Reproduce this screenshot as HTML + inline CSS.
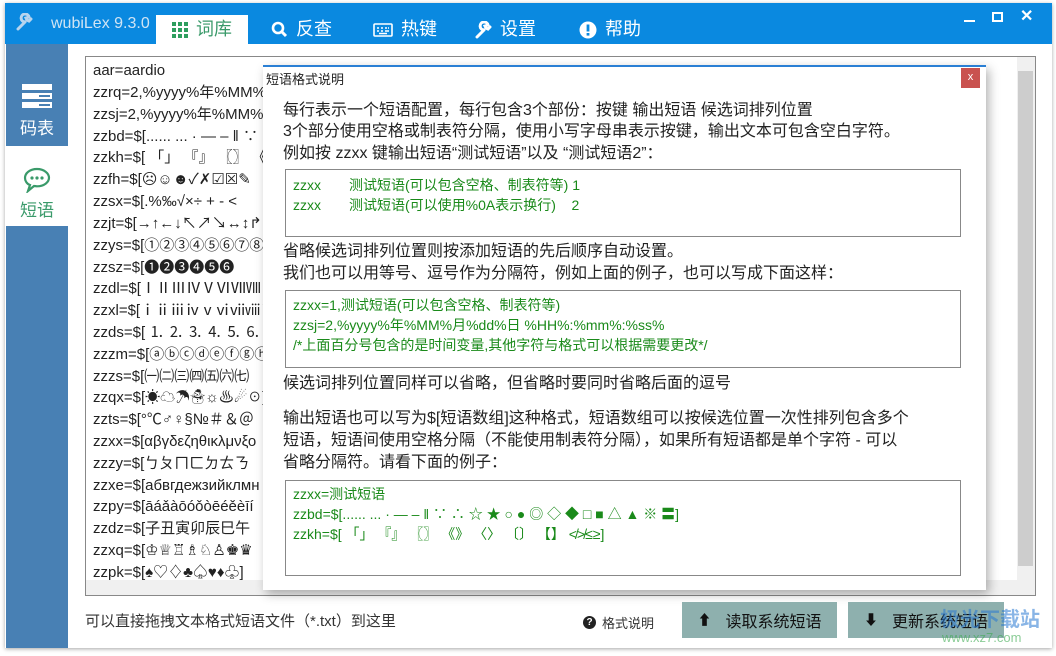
<!DOCTYPE html>
<html><head><meta charset="utf-8"><style>
*{margin:0;padding:0;box-sizing:border-box}
body{width:1056px;height:656px;background:#fff;position:relative;overflow:hidden;font-family:"Liberation Sans","Noto Sans CJK SC",sans-serif;color:#222}
.abs{position:absolute}
#win{left:5px;top:3px;width:1047px;height:645px;background:#fff;box-shadow:0 1px 4px rgba(0,0,0,.35)}
#tb{left:5px;top:3px;width:1047px;height:41px;background:#0a89e0}
.tab{position:absolute;top:12px;height:29px;color:#fff;font-size:18px;line-height:29px;display:flex;align-items:center}
.tab svg{margin-right:8px}
#side{left:6px;top:44px;width:62px;height:604px;background:#4880b4}
#list{left:85px;top:56px;width:951px;height:540px;border:1px solid #888;background:#fff;overflow:hidden}
.ln{position:absolute;left:7px;width:200px;height:21px;line-height:21px;overflow:hidden;font-size:15px;white-space:nowrap;color:#222}
#dlg{left:263px;top:65px;width:723px;height:525px;background:#fff;border-top:2px solid #2a7fd4;box-shadow:3px 4px 10px rgba(0,0,0,.3)}
.dt{position:absolute;left:20px;font-size:16px;white-space:nowrap;color:#222;line-height:21.5px}
.box{position:absolute;left:22px;width:676px;border:1px solid #888}
.g{position:absolute;left:7px;font-size:14px;color:#1a8a1a;white-space:nowrap;line-height:20px}
.btn{position:absolute;top:602px;height:36px;background:#8eb0ae;color:#111;font-size:16px;display:flex;align-items:center;justify-content:center}
</style></head><body>
<div id="win" class="abs"></div>
<div id="tb" class="abs">
 <svg class="abs" style="left:10px;top:10px" width="18" height="18" viewBox="0 0 18 18"><path d="M3 16 L10 9 M10 9 a4 4 0 1 1 4 -5 l-3 1 1 2 2 1 2-2" stroke="#b8d4ee" stroke-width="3" fill="none" stroke-linecap="round"/></svg>
 <div class="abs" style="left:46px;top:12px;color:#d0e4f4;font-size:16px">wubiLex 9.3.0</div>
 <div class="tab" style="left:151px;width:92px;background:#fff;color:#3a9a6a;justify-content:center"><svg width="16" height="16" viewBox="0 0 16 16" fill="#2e9e5e"><rect x="0" y="0" width="4" height="4"/><rect x="6" y="0" width="4" height="4"/><rect x="12" y="0" width="4" height="4"/><rect x="0" y="6" width="4" height="4"/><rect x="6" y="6" width="4" height="4"/><rect x="12" y="6" width="4" height="4"/><rect x="0" y="12" width="4" height="4"/><rect x="6" y="12" width="4" height="4"/><rect x="12" y="12" width="4" height="4"/></svg>词库</div>
 <div class="tab" style="left:266px"><svg width="17" height="17" viewBox="0 0 17 17"><circle cx="7" cy="7" r="5" stroke="#fff" stroke-width="2.6" fill="none"/><path d="M11 11 L15 15" stroke="#fff" stroke-width="3"/></svg>反查</div>
 <div class="tab" style="left:368px"><svg width="20" height="14" viewBox="0 0 20 14"><rect x="1" y="1" width="18" height="12" rx="1" stroke="#fff" stroke-width="1.6" fill="none"/><path d="M4 5h2M8 5h2M12 5h2M15 5h1M4 8h2M8 8h2M12 8h4M6 10.5h8" stroke="#fff" stroke-width="1.4"/></svg>热键</div>
 <div class="tab" style="left:469px"><svg width="18" height="18" viewBox="0 0 18 18"><path d="M3 16 L10 9 M10 9 a4 4 0 1 1 4 -5 l-3 1 1 2 2 1 2-2" stroke="#fff" stroke-width="3" fill="none" stroke-linecap="round"/></svg>设置</div>
 <div class="tab" style="left:574px"><svg width="18" height="18" viewBox="0 0 18 18"><circle cx="9" cy="9" r="8.5" fill="#fff"/><rect x="7.6" y="3.5" width="2.8" height="7" fill="#0a89e0"/><rect x="7.6" y="12" width="2.8" height="2.6" fill="#0a89e0"/></svg>帮助</div>
 <div class="abs" style="left:959px;top:17px;width:11px;height:2px;background:#fff"></div>
 <div class="abs" style="left:987px;top:9px;width:11px;height:10px;border:2px solid #fff"></div>
 <div class="abs" style="left:1015px;top:3px;color:#fff;font-size:16px;font-weight:bold">✕</div>
</div>
<div id="side" class="abs">
 <div class="abs" style="left:0;top:102px;width:62px;height:80px;background:#fff"></div>
 <svg class="abs" style="left:16px;top:40px" width="30" height="24" viewBox="0 0 30 24" fill="#fff"><rect y="0" width="30" height="6"/><rect y="9" width="30" height="6"/><rect y="18" width="30" height="6"/><rect x="17" y="11" width="11" height="2" fill="#4880b4"/><rect x="17" y="20" width="11" height="2" fill="#4880b4"/></svg>
 <div class="abs" style="left:14px;top:70px;color:#fff;font-size:17px">码表</div>
 <svg class="abs" style="left:17px;top:123px" width="28" height="26" viewBox="0 0 28 26"><path d="M14 2C7 2 2 6 2 11c0 3 2 6 5 7l-2 6 6-5c1 0 2 .3 3 .3 7 0 12-4 12-8.5S21 2 14 2z" fill="none" stroke="#3a9a6a" stroke-width="2.2"/><circle cx="9" cy="11" r="1.6" fill="#3a9a6a"/><circle cx="14" cy="11" r="1.6" fill="#3a9a6a"/><circle cx="19" cy="11" r="1.6" fill="#3a9a6a"/></svg>
 <div class="abs" style="left:14px;top:152px;color:#3a9a6a;font-size:17px">短语</div>
</div>
<div id="list" class="abs">
 <div class="ln" style="top:3px">aar=aardio</div>
 <div class="ln" style="top:25px">zzrq=2,%yyyy%年%MM%</div>
 <div class="ln" style="top:47px">zzsj=2,%yyyy%年%MM%</div>
 <div class="ln" style="top:69px">zzbd=$[...... ... · — – ‖ ∵ ∴</div>
 <div class="ln" style="top:90px">zzkh=$[ 「」 『』 〖〗 《</div>
 <div class="ln" style="top:112px">zzfh=$[☹☺☻✓✗☑☒✎</div>
 <div class="ln" style="top:134px">zzsx=$[.%‰√×÷ + - &lt;</div>
 <div class="ln" style="top:156px">zzjt=$[→↑←↓↖↗↘↔↕↱↲</div>
 <div class="ln" style="top:178px">zzys=$[①②③④⑤⑥⑦⑧⑨</div>
 <div class="ln" style="top:200px">zzsz=$[❶❷❸❹❺❻</div>
 <div class="ln" style="top:221px">zzdl=$[ⅠⅡⅢⅣⅤⅥⅦⅧⅨ</div>
 <div class="ln" style="top:243px">zzxl=$[ⅰⅱⅲⅳⅴⅵⅶⅷⅸⅹ]</div>
 <div class="ln" style="top:265px">zzds=$[ ⒈ ⒉ ⒊ ⒋ ⒌ ⒍ ⒎ ⒏</div>
 <div class="ln" style="top:287px">zzzm=$[ⓐⓑⓒⓓⓔⓕⓖⓗ</div>
 <div class="ln" style="top:309px">zzzs=$[㈠㈡㈢㈣㈤㈥㈦</div>
 <div class="ln" style="top:330px">zzqx=$[☀☁☂☃☼♨☄☉]</div>
 <div class="ln" style="top:352px">zzts=$[°℃♂♀§№＃＆＠</div>
 <div class="ln" style="top:374px">zzxx=$[αβγδεζηθικλμνξο</div>
 <div class="ln" style="top:396px">zzzy=$[ㄅㄆㄇㄈㄉㄊㄋ</div>
 <div class="ln" style="top:418px">zzxe=$[абвгдежзийклмн</div>
 <div class="ln" style="top:439px">zzpy=$[āáǎàōóǒòēéěèīí</div>
 <div class="ln" style="top:461px">zzdz=$[子丑寅卯辰巳午</div>
 <div class="ln" style="top:483px">zzxq=$[♔♕♖♗♘♙♚♛</div>
 <div class="ln" style="top:505px">zzpk=$[♠♡♢♣♤♥♦♧]</div>
 <div class="abs" style="left:0;top:523px;width:949px;height:16px;background:#f0f0f0"></div>
 <div class="abs" style="left:931px;top:0;width:18px;height:523px;background:#f0f0f0"></div>
 <div class="abs" style="left:932px;top:14px;width:15px;height:495px;background:#cdcdcd"></div>
</div>
<div id="dlg" class="abs">
 <div class="abs" style="left:3px;top:2px;font-size:13px;color:#222">短语格式说明</div>
 <div class="abs" style="left:698px;top:1px;width:19px;height:20px;background:#c9524f;color:#fff;font-size:11px;text-align:center;line-height:19px">x</div>
 <div class="dt" style="top:33px">每行表示一个短语配置，每行包含3个部份：按键 输出短语 候选词排列位置</div>
 <div class="dt" style="top:54px">3个部分使用空格或制表符分隔，使用小写字母串表示按键，输出文本可包含空白字符。</div>
 <div class="dt" style="top:76px">例如按 zzxx 键输出短语“测试短语”以及 “测试短语2”：</div>
 <div class="box" style="top:102px;height:68px">
  <div class="g" style="top:5px">zzxx</div><div class="g" style="left:63px;top:5px">测试短语(可以包含空格、制表符等) 1</div>
  <div class="g" style="top:25px">zzxx</div><div class="g" style="left:63px;top:25px">测试短语(可以使用%0A表示换行)&nbsp;&nbsp;&nbsp; 2</div>
 </div>
 <div class="dt" style="top:174px">省略候选词排列位置则按添加短语的先后顺序自动设置。</div>
 <div class="dt" style="top:196px">我们也可以用等号、逗号作为分隔符，例如上面的例子，也可以写成下面这样：</div>
 <div class="box" style="top:223px;height:78px">
  <div class="g" style="top:4px">zzxx=1,测试短语(可以包含空格、制表符等)</div>
  <div class="g" style="top:24px">zzsj=2,%yyyy%年%MM%月%dd%日 %HH%:%mm%:%ss%</div>
  <div class="g" style="top:44px">/*上面百分号包含的是时间变量,其他字符与格式可以根据需要更改*/</div>
 </div>
 <div class="dt" style="top:306px">候选词排列位置同样可以省略，但省略时要同时省略后面的逗号</div>
 <div class="dt" style="top:341px">输出短语也可以写为$[短语数组]这种格式，短语数组可以按候选位置一次性排列包含多个</div>
 <div class="dt" style="top:363px">短语，短语间使用空格分隔（不能使用制表符分隔），如果所有短语都是单个字符 - 可以</div>
 <div class="dt" style="top:385px">省略分隔符。请看下面的例子：</div>
 <div class="box" style="top:413px;height:96px">
  <div class="g" style="top:3px">zzxx=测试短语</div>
  <div class="g" style="top:23px">zzbd=$[...... ... · — – ‖ ∵ ∴ ☆ ★ ○ ● ◎ ◇ ◆ □ ■ △ ▲ ※ 〓]</div>
  <div class="g" style="top:43px">zzkh=$[ 「」 『』 〖〗 《》 〈〉 〔〕 【】 ≮≯≤≥]</div>
 </div>
</div>
<div class="abs" style="left:85px;top:610px;font-size:15px;color:#333">可以直接拖拽文本格式短语文件（*.txt）到这里</div>
<div class="abs" style="left:583px;top:613px;font-size:13px;color:#333;display:flex;align-items:center"><span style="display:inline-block;width:13px;height:13px;border-radius:50%;background:#222;color:#fff;font-size:10px;text-align:center;line-height:13px;font-weight:bold;margin-right:6px">?</span>格式说明</div>
<div class="btn" style="left:682px;width:155px"><span style="font-size:14px;margin-right:14px">⬆</span>读取系统短语</div>
<div class="btn" style="left:848px;width:156px"><span style="font-size:14px;margin-right:14px">⬇</span>更新系统短语</div>
<div class="abs" style="left:940px;top:603px;font-size:20px;font-weight:bold;color:rgba(40,120,210,.55)">极光下载站</div>
<div class="abs" style="left:942px;top:630px;font-size:13px;color:rgba(60,170,80,.6)">www.xz7.com</div>
</body></html>
